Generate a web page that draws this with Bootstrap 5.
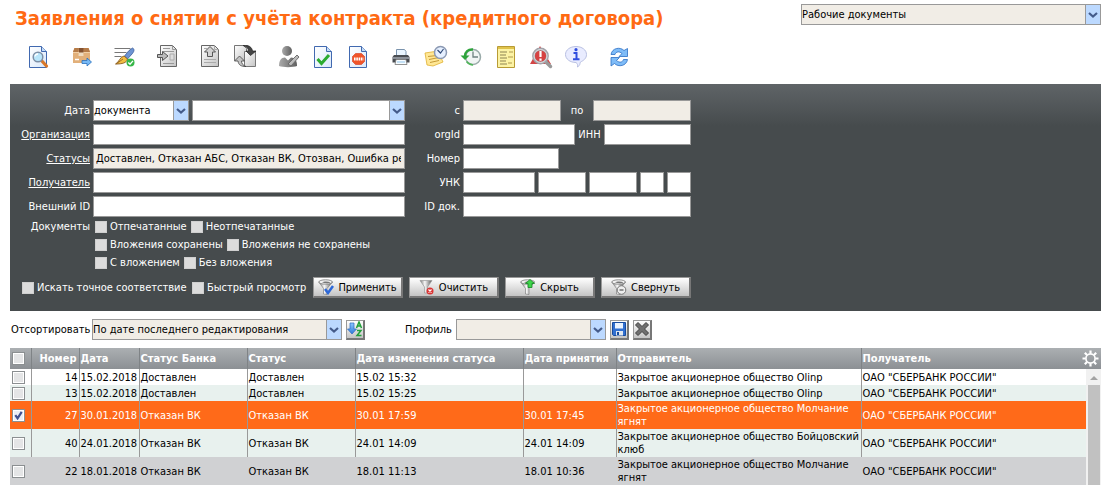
<!DOCTYPE html>
<html lang="ru">
<head>
<meta charset="utf-8">
<meta name="viewport" content="width=device-width, initial-scale=1">
<title>Заявления о снятии с учёта контракта</title>
<link href="https://cdn.jsdelivr.net/npm/bootstrap@5.3.0/dist/css/bootstrap.min.css" rel="stylesheet">
<style>
  body { font-family: Tahoma, "DejaVu Sans Condensed", "DejaVu Sans", sans-serif; font-size: 11px; line-height: 13px; color: #000; background: #fff; }
  .page-wrap { padding-left: 10px; }
  .page-title { font-size: 20px; line-height: 24px; font-weight: 700; color: #ff6a13; padding: 6px 0 0 5px; }
  .page-head { height: 42px; }
  .form-control, .form-select { height: 21px; min-height: 0; border: 1px solid #999; border-radius: 0; padding: 0 3px 0 2px; font-size: 11px; line-height: 19px; color: #000; background-color: #fff; }
  .form-select { padding-left: 0; padding-right: 16px; background-image: url("data:image/svg+xml,%3Csvg xmlns='http://www.w3.org/2000/svg' width='15' height='19'%3E%3Cpath fill='%23bcd9ff' d='M0 0h15v19H0z'/%3E%3Cpath fill='%23999' d='M0 0h1v19H0z'/%3E%3Cpath fill='none' stroke='%23445b8a' stroke-width='2.200' d='M4 8l4 3.500 4-3.500'/%3E%3C/svg%3E"); background-size: 15px 19px; background-position: right center; }
  .fld-muted, .fld-muted:disabled { background-color: #f1ede6; }
  .folder-select { width: 300px; margin-top: 4px; }

  .icon-bar { padding: 3px 0 0 10px; height: 42px; }
  .icon-bar button { width: 35px; height: 24px; padding: 0; border: 0; background: none; line-height: 0; }
  .icon-bar .grp { margin-left: 8px; }
  .icon-bar svg { width: 24px; height: 24px; }

  .filter-panel { background: linear-gradient(#5f6467, #464b4d 42px); color: #fff; padding: 16px 0 13px; }
  .filter-panel a { color: #fff; }
  .filter-grid { display: grid; grid-template-columns: 83px 312px 58px 228px; row-gap: 3px; align-items: center; }
  .filter-grid > .cap { text-align: right; padding-right: 3px; }
  .w-kind { width: 96px; }
  .w-date { width: 98px; }
  .w-org { width: 112px; }
  .w-inn { width: 87px; }
  .w-key { width: 72px; }
  .w-mid { width: 48px; }
  .w-tiny { width: 24px; }
  .gap-s { gap: 3px; }
  .gap-m { gap: 6px; }

  .doc-checks { margin-top: 1px; line-height: 18px; }
  .doc-checks .cap { width: 80px; text-align: right; }
  .doc-checks .lines { padding-left: 5px; }
  .doc-checks .gap-m { gap: 4px; }
  .tick { display: inline-flex; align-items: center; gap: 3px; white-space: nowrap; }
  .form-check-input[type=checkbox] { width: 12px; height: 12px; margin: 0; flex: none; border: 1px solid #cfcfcf; border-radius: 0; background-color: #dcdcdc; }
  .actions { margin-top: 5px; padding-left: 12px; }
  .tick-exact { width: 170px; }
  .tick-quick { width: 121px; }
  .btn-tool { height: 21px; padding: 0; border: 1px solid #999; border-right: 2px solid #777; border-bottom: 2px solid #777; border-radius: 0; background: linear-gradient(#fff, #c4c4c4); color: #000; font-size: 11px; line-height: 13px; display: inline-flex; align-items: center; justify-content: center; }
  .btn-tool:hover { background: #eee; }
  .btn-act { width: 90px; gap: 4px; }
  .btn-sq { width: 19px; height: 20px; }
  .btn-tool svg { width: 16px; height: 16px; flex: none; }

  .sort-bar { padding: 8px 0 8px 1px; }
  .sort-bar .lbl { width: 81px; }
  .w-sort { width: 250px; }
  .sort-bar .lbl-prof { width: 51px; margin-left: 40px; }
  .w-prof { width: 150px; }
  .ml-4px { margin-left: 4px; }

  .doc-table { --bs-table-bg: transparent; table-layout: fixed; margin: 0; font-size: 11px; line-height: 13px; color: #000; }
  .doc-table > :not(caption) > * > * { padding: 0 0 0 1px; border: 0 solid #999; border-right-width: 1px; vertical-align: middle; box-shadow: none; color: inherit; background: none; overflow: hidden; }
  .doc-table > :not(caption) > tr > :first-child { padding-left: 2px; }
  .doc-table > thead > tr { height: 21px; background: linear-gradient(#abafb2, #8c9094); color: #fff; }
  .doc-table > thead > tr > th { border-color: #7f8386; white-space: nowrap; }
  .doc-table > tbody > tr > .num { text-align: right; padding: 0 1px 0 0; }
  .doc-table > thead > tr > .num { text-align: right; padding: 0 2px 0 0; }
  .doc-table > :not(caption) > tr > :last-child { border-right-width: 0; }
  .doc-table > tbody > tr { height: 16px; }
  .doc-table > tbody > tr > .recip { border-right-width: 0; }
  .doc-table > tbody > .tall { height: 28px; }
  .row-even { background: #e8f1ee; }
  .row-sel { background: #ff6a19; color: #fff; }
  .row-hover { background: #d0d1d3; }
  .doc-table > tbody > .row-hover > td { border-color: #d0d1d3; }
  .doc-table .form-check-input[type=checkbox] { display: block; width: 13px; height: 13px; border: 1px solid #8b8f91; background-color: #e4e5e6; box-shadow: inset 0 0 0 1px #fff; }
  .doc-table .form-check-input[type=checkbox]:checked { background-color: #eceef4; background-image: url("data:image/svg+xml,%3Csvg xmlns='http://www.w3.org/2000/svg' viewBox='0 0 12 12'%3E%3Cpath fill='none' stroke='%23405090' stroke-width='2.400' d='M2.500 5.500l2.500 3.500 4.500-7'/%3E%3C/svg%3E"); }
  .doc-table > tbody > tr > .scroll-cell { padding: 0; background: #f1f1f1; vertical-align: top; height: 1px; }
  .scroll-box { height: 116px; }
  .scroll-box svg { width: 15px; height: 16px; display: block; flex: none; }
  .scroll-thumb { background: #c1c1c1; width: 12px; margin: 0 auto; }
  .gear { width: 17px; height: 17px; margin-right: 2px; padding: 0; border: 0; background: none; line-height: 0; }
  .c1 { width: 21px; } .c2 { width: 48px; } .c3 { width: 60px; } .c4 { width: 108px; } .c6 { width: 168px; } .c7 { width: 93px; } .c8 { width: 245px; } .c10 { width: 15px; }
</style>
</head>
<body>
<svg width="0" height="0" class="position-absolute" aria-hidden="true">
  <defs>
    <linearGradient id="paper" x1="0" y1="0" x2="1" y2="1"><stop offset="0" stop-color="#fff"/><stop offset="1" stop-color="#d9e8fa"/></linearGradient>
    <linearGradient id="greypaper" x1="0" y1="0" x2="1" y2="1"><stop offset="0" stop-color="#fff"/><stop offset="1" stop-color="#c4c4c4"/></linearGradient>
    <linearGradient id="metal" x1="0" x2="1"><stop offset="0" stop-color="#777"/><stop offset=".4" stop-color="#f8f8f8"/><stop offset="1" stop-color="#555"/></linearGradient>
    <linearGradient id="person" x1="0" x2="1"><stop offset="0" stop-color="#aaa"/><stop offset="1" stop-color="#5f5f5f"/></linearGradient>
    <linearGradient id="bluearr" x1="0" y1="0" x2="0" y2="1"><stop offset="0" stop-color="#8cc6ff"/><stop offset="1" stop-color="#2f78d8"/></linearGradient>
    <g id="bluedoc"><path d="M3.500 1.500h12l5 5v16h-17z" fill="url(#paper)" stroke="#4169b0"/><path d="M15.500 1.500v5h5" fill="#c5dcf5" stroke="#4169b0"/></g>
    <g id="funnel"><path d="M.800 3L5.500 9.500v5.500l3.500.500V9.500L14.500 3z" fill="url(#metal)" stroke="#777" stroke-width=".6"/><ellipse cx="7.600" cy="3" rx="6.800" ry="2.200" fill="#f2f2f2" stroke="#777" stroke-width=".8"/><path d="M4 3.200c2-1 6-1 8.500 0-2 1.500-6 1.500-8.500 0z" fill="#777"/></g>
  </defs>
</svg>

<div class="page-wrap">
  <header class="page-head d-flex justify-content-between align-items-start">
    <h1 class="page-title m-0">Заявления о снятии с учёта контракта (кредитного договора)</h1>
    <select class="form-select fld-muted folder-select" aria-label="Папка"><option>Рабочие документы</option></select>
  </header>

  <div class="icon-bar d-flex" role="toolbar" aria-label="Действия">
    <button type="button" aria-label="Просмотр"><svg viewBox="0 0 24 24"><use href="#bluedoc"/><path d="M15 15l5.500 6" stroke="#d9782a" stroke-width="3.200" stroke-linecap="round"/><circle cx="12" cy="12" r="4.800" fill="#b9e6fb" stroke="#7d8fa6" stroke-width="1.500"/><path d="M9 11.500a3 3 0 0 1 3-2.500" fill="none" stroke="#fff" stroke-width="1.300"/></svg></button>
    <button type="button" class="grp" aria-label="Отправить"><svg viewBox="0 0 24 24"><path d="M5.500 3h14l1.500 4v11H4V7z" fill="#d9a066"/><path d="M5.500 3h14l1.500 4H4z" fill="#b57b48"/><path d="M4 7h17v11H4z" fill="#e2b07a"/><path d="M4 7.500h17" stroke="#f1cfa5"/><path d="M10 3h4l.5 8h-5z" fill="#f0dcc0"/><path d="M10 3h4.500v4.500H10z" fill="#85522f"/><path d="M6 14.500h4" stroke="#fff" stroke-width="1.500"/><path d="M13 15.500h5v-2.500l4.500 4-4.500 4v-2.500h-5z" fill="#78b9f5" stroke="#2870bd" stroke-width=".8"/></svg></button>
    <button type="button" class="grp" aria-label="Подписать"><svg viewBox="0 0 24 24"><path d="M2.500 3.500h16M2.500 7.500h12M2.500 11.500h7" stroke="#777" stroke-width="1.200"/><path d="M20.500 3c2.500 1 1.500 4-.5 6l-4.500 5-3-3 4.500-5.500z" fill="#6d94d2" stroke="#2b4f91" stroke-width=".7"/><path d="M12 11l3.500 3c-1 4-5 5-12 5 4-2 4-7 8.500-8z" fill="#f1bd43" stroke="#8a5c20" stroke-width=".9"/><path d="M4 19l7-5" stroke="#8a5c20" stroke-width=".8"/><circle cx="18.500" cy="17.500" r="4" fill="#36b647"/><path d="M16.300 17.500l1.700 1.800 3-3.400" stroke="#fff" stroke-width="1.400" fill="none"/></svg></button>
    <button type="button" class="grp" aria-label="Импорт"><svg viewBox="0 0 24 24"><path d="M5.500.500h12l4 4v17h-16z" fill="url(#greypaper)" stroke="#666"/><path d="M17.500.500v4h4M8 3.500h7M8 6.500h11M8 18.500h11" fill="none" stroke="#999"/><path d="M15 9h4v6h-4z" fill="#ddd" stroke="#aaa"/><path d="M2.500 9.500h5v-3l5.500 4.500-5.500 4.500v-3h-5z" fill="#bbb" stroke="#555"/></svg></button>
    <button type="button" class="grp" aria-label="Экспорт"><svg viewBox="0 0 24 24"><path d="M3.500.500h13l4 4v17h-17z" fill="url(#greypaper)" stroke="#666"/><path d="M16.500.500v4h4M6 3.500h3M6 14.500h12M6 17.500h12" fill="none" stroke="#aaa"/><path d="M12 1.500l5.500 5.500h-3v4.500h-5V7h-3z" fill="#d2d2d2" stroke="#555"/></svg></button>
    <button type="button" aria-label="Обмен"><svg viewBox="0 0 24 24"><path d="M1.500.500h9l3 3v12h-12z" fill="url(#greypaper)" stroke="#777"/><path d="M11.500 6.500h11v15h-11z" fill="url(#greypaper)" stroke="#777"/><path d="M10 .5c6-1 9 2 9.500 5.500h3.500l-5.500 4.500-4.500-4.500h2.500c0-3-2.500-4.500-5.500-5.500z" fill="#444" stroke="#222" stroke-width=".7"/><path d="M13 21.500c-5 0-7.500-1.500-8-5.500H1.500l5-5 5 5h-3c0 2.500 1.500 4.500 4.500 5.500z" fill="#c4c4c4" stroke="#444" stroke-width=".8"/></svg></button>
    <button type="button" class="grp" aria-label="Ответственный"><svg viewBox="0 0 24 24"><circle cx="11" cy="6" r="5" fill="url(#person)"/><path d="M3 21c0-5.500 2-8.500 6-8.500l3 3 3-3c4 0 6 3 6 8.500-4 1.500-14 1.500-18 0z" fill="url(#person)"/><path d="M12 19l9-9 2 2-8 9z" fill="#bbb" stroke="#666" stroke-width=".9"/></svg></button>
    <button type="button" aria-label="Проверить"><svg viewBox="0 0 24 24"><use href="#bluedoc"/><path d="M6.500 14l4 4.500 7.500-8.500" fill="none" stroke="#2bab2f" stroke-width="3"/></svg></button>
    <button type="button" aria-label="Остановить"><svg viewBox="0 0 24 24"><use href="#bluedoc"/><path d="M9.500 8.500h6l3 3v5l-3 3h-6l-3-3v-5z" fill="#f0552a" stroke="#d5391b" stroke-width=".6"/><path d="M8 14h9.500" stroke="#fff" stroke-width="3" stroke-dasharray="1.600 .7"/></svg></button>
    <button type="button" class="grp" aria-label="Печать"><svg viewBox="0 0 24 24"><path d="M7.500 4.500h8l1.500 2V11h-9.500z" fill="#eaf5ff" stroke="#7a93ad"/><path d="M5 10h14l1.500 2v5.500h-17V12z" fill="#4a4d52"/><path d="M4 12h16v2H4z" fill="#8c9199"/><path d="M7 14.500h10l1 5h-12z" fill="#f7fcff" stroke="#777" stroke-width=".8"/><path d="M8 17h8" stroke="#8fc3ea"/></svg></button>
    <button type="button" aria-label="Напоминание"><svg viewBox="0 0 24 24"><path d="M1 8l13-2 5 11-10 4-6-1z" fill="#ffe795" stroke="#e0b030" stroke-width=".8"/><path d="M4 11.500l9-1M5 14.500l10-2M6 17.500l9-2" stroke="#c59a37"/><circle cx="16.500" cy="7.500" r="6" fill="#e6f0ff" stroke="#8b99b3" stroke-width="1.500"/><path d="M13.500 5l3 3 3-4" fill="none" stroke="#334c7a" stroke-width="1.200"/></svg></button>
    <button type="button" aria-label="История"><svg viewBox="0 0 24 24"><circle cx="14" cy="12" r="7.500" fill="#f1f5f4" stroke="#9aaba9" stroke-width="1.500"/><path d="M14 6.500V12h5" fill="none" stroke="#6d8180" stroke-width="1.300"/><path d="M14 4.500C9 4 6 7 6 11" fill="none" stroke="#2da33b" stroke-width="2.400"/><path d="M1.500 10.500h9L6 15z" fill="#2da33b"/><path d="M7.500 16.500c2 2.500 4 3.500 6.500 3.500" fill="none" stroke="#50b55a" stroke-width="1.500"/></svg></button>
    <button type="button" aria-label="Журнал"><svg viewBox="0 0 24 24"><path d="M3.500 1.500h17v21h-17z" fill="#fcf3a4" stroke="#b89b35"/><path d="M4 3h16" stroke="#e0c34b" stroke-width="2"/><path d="M6 7h7M6 10h6M6 13h7M6 16h6M6 19h7" stroke="#8b8353" stroke-width="1.200"/><path d="M15 7h4M14 12h5M14 18h4" stroke="#c9b869" stroke-width="1.500"/></svg></button>
    <button type="button" aria-label="Ошибки"><svg viewBox="0 0 24 24"><path d="M11 1l11 18H1z" fill="#d34545"/><path d="M16.500 16.500l5 5" stroke="#999" stroke-width="3.500" stroke-linecap="round"/><circle cx="11.500" cy="11" r="7" fill="#d64242" stroke="#a3a3aa" stroke-width="2.800"/><circle cx="11.500" cy="11" r="6.500" fill="none" stroke="#eee" stroke-width=".8"/><path d="M11.500 6v6M11.500 13.500v2.300" stroke="#fff" stroke-width="2.200"/></svg></button>
    <button type="button" aria-label="Справка"><svg viewBox="0 0 24 24"><path d="M12 1.500c6 0 10.500 3.500 10.500 8 0 4-3 6-6 7.500-1 2 0 3-3 5 0-2 .5-3-1.500-4.500-6 0-10.500-3.500-10.500-8s4.500-8 10.500-8z" fill="#e9ecff" stroke="#b9c0e2"/><circle cx="12" cy="4.700" r="1.600" fill="#304dde"/><path d="M9.500 8h3v6M9 14.200h6.500" fill="none" stroke="#304dde" stroke-width="2"/></svg></button>
    <button type="button" class="grp" aria-label="Обновить"><svg viewBox="0 0 24 24"><path d="M4 9.500c1-6.500 9-8 13-4l3.500-2v8H12l3-3c-3-2.500-6-2-7 1z" fill="#7fbcf7" stroke="#2c6fc4" stroke-width=".8"/><path d="M20.500 14.500c-1 6.500-9 8-13 4L4 21v-8.500h8.500l-3 3c3 2.500 6 2 7-1z" fill="#7fbcf7" stroke="#2c6fc4" stroke-width=".8"/></svg></button>
  </div>

  <form class="filter-panel">
    <div class="filter-grid">
      <label class="cap" for="dkind">Дата</label>
      <div class="d-flex gap-s"><select id="dkind" class="form-select w-kind"><option>документа</option></select><select class="form-select flex-fill w-auto" aria-label="Период"><option></option></select></div>
      <label class="cap" for="dfrom">с</label>
      <div class="d-flex justify-content-between align-items-center"><input id="dfrom" class="form-control fld-muted w-date" disabled><label for="dto">по</label><input id="dto" class="form-control fld-muted w-date" disabled></div>

      <div class="cap"><a href="#">Организация</a></div>
      <input class="form-control" aria-label="Организация">
      <label class="cap" for="orgid">orgId</label>
      <div class="d-flex justify-content-between align-items-center"><input id="orgid" class="form-control w-org"><label for="inn">ИНН</label><input id="inn" class="form-control w-inn"></div>

      <div class="cap"><a href="#">Статусы</a></div>
      <input class="form-control fld-muted" aria-label="Статусы" readonly value="Доставлен, Отказан АБС, Отказан ВК, Отозван, Ошибка ре">
      <label class="cap" for="num">Номер</label>
      <input id="num" class="form-control w-kind">

      <div class="cap"><a href="#">Получатель</a></div>
      <input class="form-control" aria-label="Получатель">
      <label class="cap" for="unk">УНК</label>
      <div class="d-flex gap-s"><input id="unk" class="form-control w-key"><input class="form-control w-mid" aria-label="УНК 2"><input class="form-control w-mid" aria-label="УНК 3"><input class="form-control w-tiny" aria-label="УНК 4"><input class="form-control w-tiny" aria-label="УНК 5"></div>

      <label class="cap" for="ext">Внешний ID</label>
      <input id="ext" class="form-control">
      <label class="cap" for="iddoc">ID док.</label>
      <input id="iddoc" class="form-control">
    </div>

    <div class="doc-checks d-flex">
      <div class="cap">Документы</div>
      <div class="lines">
        <div class="d-flex gap-m"><label class="tick"><input type="checkbox" class="form-check-input">Отпечатанные</label><label class="tick"><input type="checkbox" class="form-check-input">Неотпечатанные</label></div>
        <div class="d-flex gap-m"><label class="tick"><input type="checkbox" class="form-check-input">Вложения сохранены</label><label class="tick"><input type="checkbox" class="form-check-input">Вложения не сохранены</label></div>
        <div class="d-flex gap-m"><label class="tick"><input type="checkbox" class="form-check-input">С вложением</label><label class="tick"><input type="checkbox" class="form-check-input">Без вложения</label></div>
      </div>
    </div>

    <div class="actions d-flex align-items-center">
      <label class="tick tick-exact"><input type="checkbox" class="form-check-input">Искать точное соответствие</label>
      <label class="tick tick-quick"><input type="checkbox" class="form-check-input">Быстрый просмотр</label>
      <div class="d-flex gap-m">
        <button type="button" class="btn btn-tool btn-act"><svg viewBox="0 0 16 16"><use href="#funnel"/><path d="M7 10l3 4L15 7" fill="none" stroke="#2d68d8" stroke-width="2.500"/></svg>Применить</button>
        <button type="button" class="btn btn-tool btn-act"><svg viewBox="0 0 16 16"><path d="M1 1.500h12L8.500 8v6h-3V8z" fill="url(#metal)" stroke="#999" stroke-width=".7"/><circle cx="11" cy="12" r="3.500" fill="#d93434"/><path d="M9.500 10.500l3 3m0-3l-3 3" stroke="#fff" stroke-width="1.200"/></svg>Очистить</button>
        <button type="button" class="btn btn-tool btn-act"><svg viewBox="0 0 16 16"><use href="#funnel"/><path d="M10 .500l4.500 4H12v4H8v-4H5.500z" fill="#3ed44a" stroke="#168524" stroke-width=".8"/></svg>Скрыть</button>
        <button type="button" class="btn btn-tool btn-act"><svg viewBox="0 0 16 16"><use href="#funnel"/><circle cx="10.500" cy="11" r="4.300" fill="#eee" stroke="#777"/><path d="M8.500 11h4" stroke="#555" stroke-width="1.200"/></svg>Свернуть</button>
      </div>
    </div>
  </form>

  <div class="sort-bar d-flex align-items-center">
    <label class="lbl" for="sort">Отсортировать</label>
    <select id="sort" class="form-select fld-muted w-sort"><option>По дате последнего редактирования</option></select>
    <button type="button" class="btn btn-tool btn-sq ml-4px" aria-label="По возрастанию"><svg viewBox="0 0 16 16"><path d="M3 2h4v6h2.500L5 13 .500 8H3z" fill="url(#bluearr)" stroke="#2c6bc0" stroke-width=".7"/><path d="M9.500 7L12 1l2.500 6M10.500 5h3M10 9.500h4L10 14.500h4.500" fill="none" stroke="#21a03a" stroke-width="1.500"/></svg></button>
    <label class="lbl-prof" for="prof">Профиль</label>
    <select id="prof" class="form-select fld-muted w-prof"><option></option></select>
    <button type="button" class="btn btn-tool btn-sq ml-4px" aria-label="Сохранить профиль"><svg viewBox="0 0 16 16"><path d="M1.500 1.500h13v13h-12l-1-1z" fill="#316fd0" stroke="#174b9e"/><path d="M4 2h8v5.500H4z" fill="#eaf3ff"/><path d="M5 10h7v4.500H5z" fill="#dfe7f0"/><path d="M6 11h2v3H6z" fill="#174b9e"/></svg></button>
    <button type="button" class="btn btn-tool btn-sq ml-4px" aria-label="Удалить профиль"><svg viewBox="0 0 16 16"><path d="M4 1.500l4 4 4-4L14.500 4l-4 4 4 4-2.500 2.500-4-4-4 4L1.500 12l4-4-4-4z" fill="#6f6f6f" stroke="#3f3f3f" stroke-linejoin="round"/></svg></button>
  </div>

  <table class="table doc-table">
    <colgroup><col class="c1"><col class="c2"><col class="c3"><col class="c4"><col class="c4"><col class="c6"><col class="c7"><col class="c8"><col><col class="c10"></colgroup>
    <thead>
      <tr><th><input type="checkbox" class="form-check-input" aria-label="Выбрать все"></th><th class="num">Номер</th><th>Дата</th><th>Статус Банка</th><th>Статус</th><th>Дата изменения статуса</th><th>Дата принятия</th><th>Отправитель</th>
      <th colspan="2"><div class="d-flex justify-content-between align-items-center">Получатель<button type="button" class="gear" aria-label="Настройки"><svg viewBox="0 0 17 17" width="17" height="17" fill="none" stroke="#fff"><circle cx="8.500" cy="8.500" r="4.600" stroke-width="1.700"/><path stroke-width="2.200" d="M8.500 3.500V.500M8.500 13.500v3M3.500 8.500h-3M13.500 8.500h3M5 5L2.800 2.800M12 12l2.200 2.200M12 5l2.200-2.200M5 12l-2.200 2.200"/></svg></button></div></th></tr>
    </thead>
    <tbody>
      <tr><td><input type="checkbox" class="form-check-input" aria-label="14"></td><td class="num">14</td><td>15.02.2018</td><td>Доставлен</td><td>Доставлен</td><td>15.02 15:32</td><td></td><td>Закрытое акционерное общество Olinp</td><td class="recip">ОАО "СБЕРБАНК РОССИИ"</td>
        <td class="scroll-cell" rowspan="5"><div class="scroll-box d-flex flex-column"><svg viewBox="0 0 15 16"><path d="M4 11l4-4 4 4z" fill="#a3a3a3"/></svg><div class="scroll-thumb flex-fill"></div></div></td></tr>
      <tr class="row-even"><td><input type="checkbox" class="form-check-input" aria-label="13"></td><td class="num">13</td><td>15.02.2018</td><td>Доставлен</td><td>Доставлен</td><td>15.02 15:25</td><td></td><td>Закрытое акционерное общество Olinp</td><td class="recip">ОАО "СБЕРБАНК РОССИИ"</td></tr>
      <tr class="row-sel tall"><td><input type="checkbox" class="form-check-input" aria-label="27" checked></td><td class="num">27</td><td>30.01.2018</td><td>Отказан ВК</td><td>Отказан ВК</td><td>30.01 17:59</td><td>30.01 17:45</td><td>Закрытое акционерное общество Молчание ягнят</td><td class="recip">ОАО "СБЕРБАНК РОССИИ"</td></tr>
      <tr class="row-even tall"><td><input type="checkbox" class="form-check-input" aria-label="40"></td><td class="num">40</td><td>24.01.2018</td><td>Отказан ВК</td><td>Отказан ВК</td><td>24.01 14:09</td><td>24.01 14:09</td><td>Закрытое акционерное общество Бойцовский клюб</td><td class="recip">ОАО "СБЕРБАНК РОССИИ"</td></tr>
      <tr class="row-hover tall"><td><input type="checkbox" class="form-check-input" aria-label="22"></td><td class="num">22</td><td>18.01.2018</td><td>Отказан ВК</td><td>Отказан ВК</td><td>18.01 11:13</td><td>18.01 10:36</td><td>Закрытое акционерное общество Молчание ягнят</td><td class="recip">ОАО "СБЕРБАНК РОССИИ"</td></tr>
    </tbody>
  </table>
</div>
<script src="https://cdn.jsdelivr.net/npm/bootstrap@5.3.0/dist/js/bootstrap.bundle.min.js"></script>
</body>
</html>
